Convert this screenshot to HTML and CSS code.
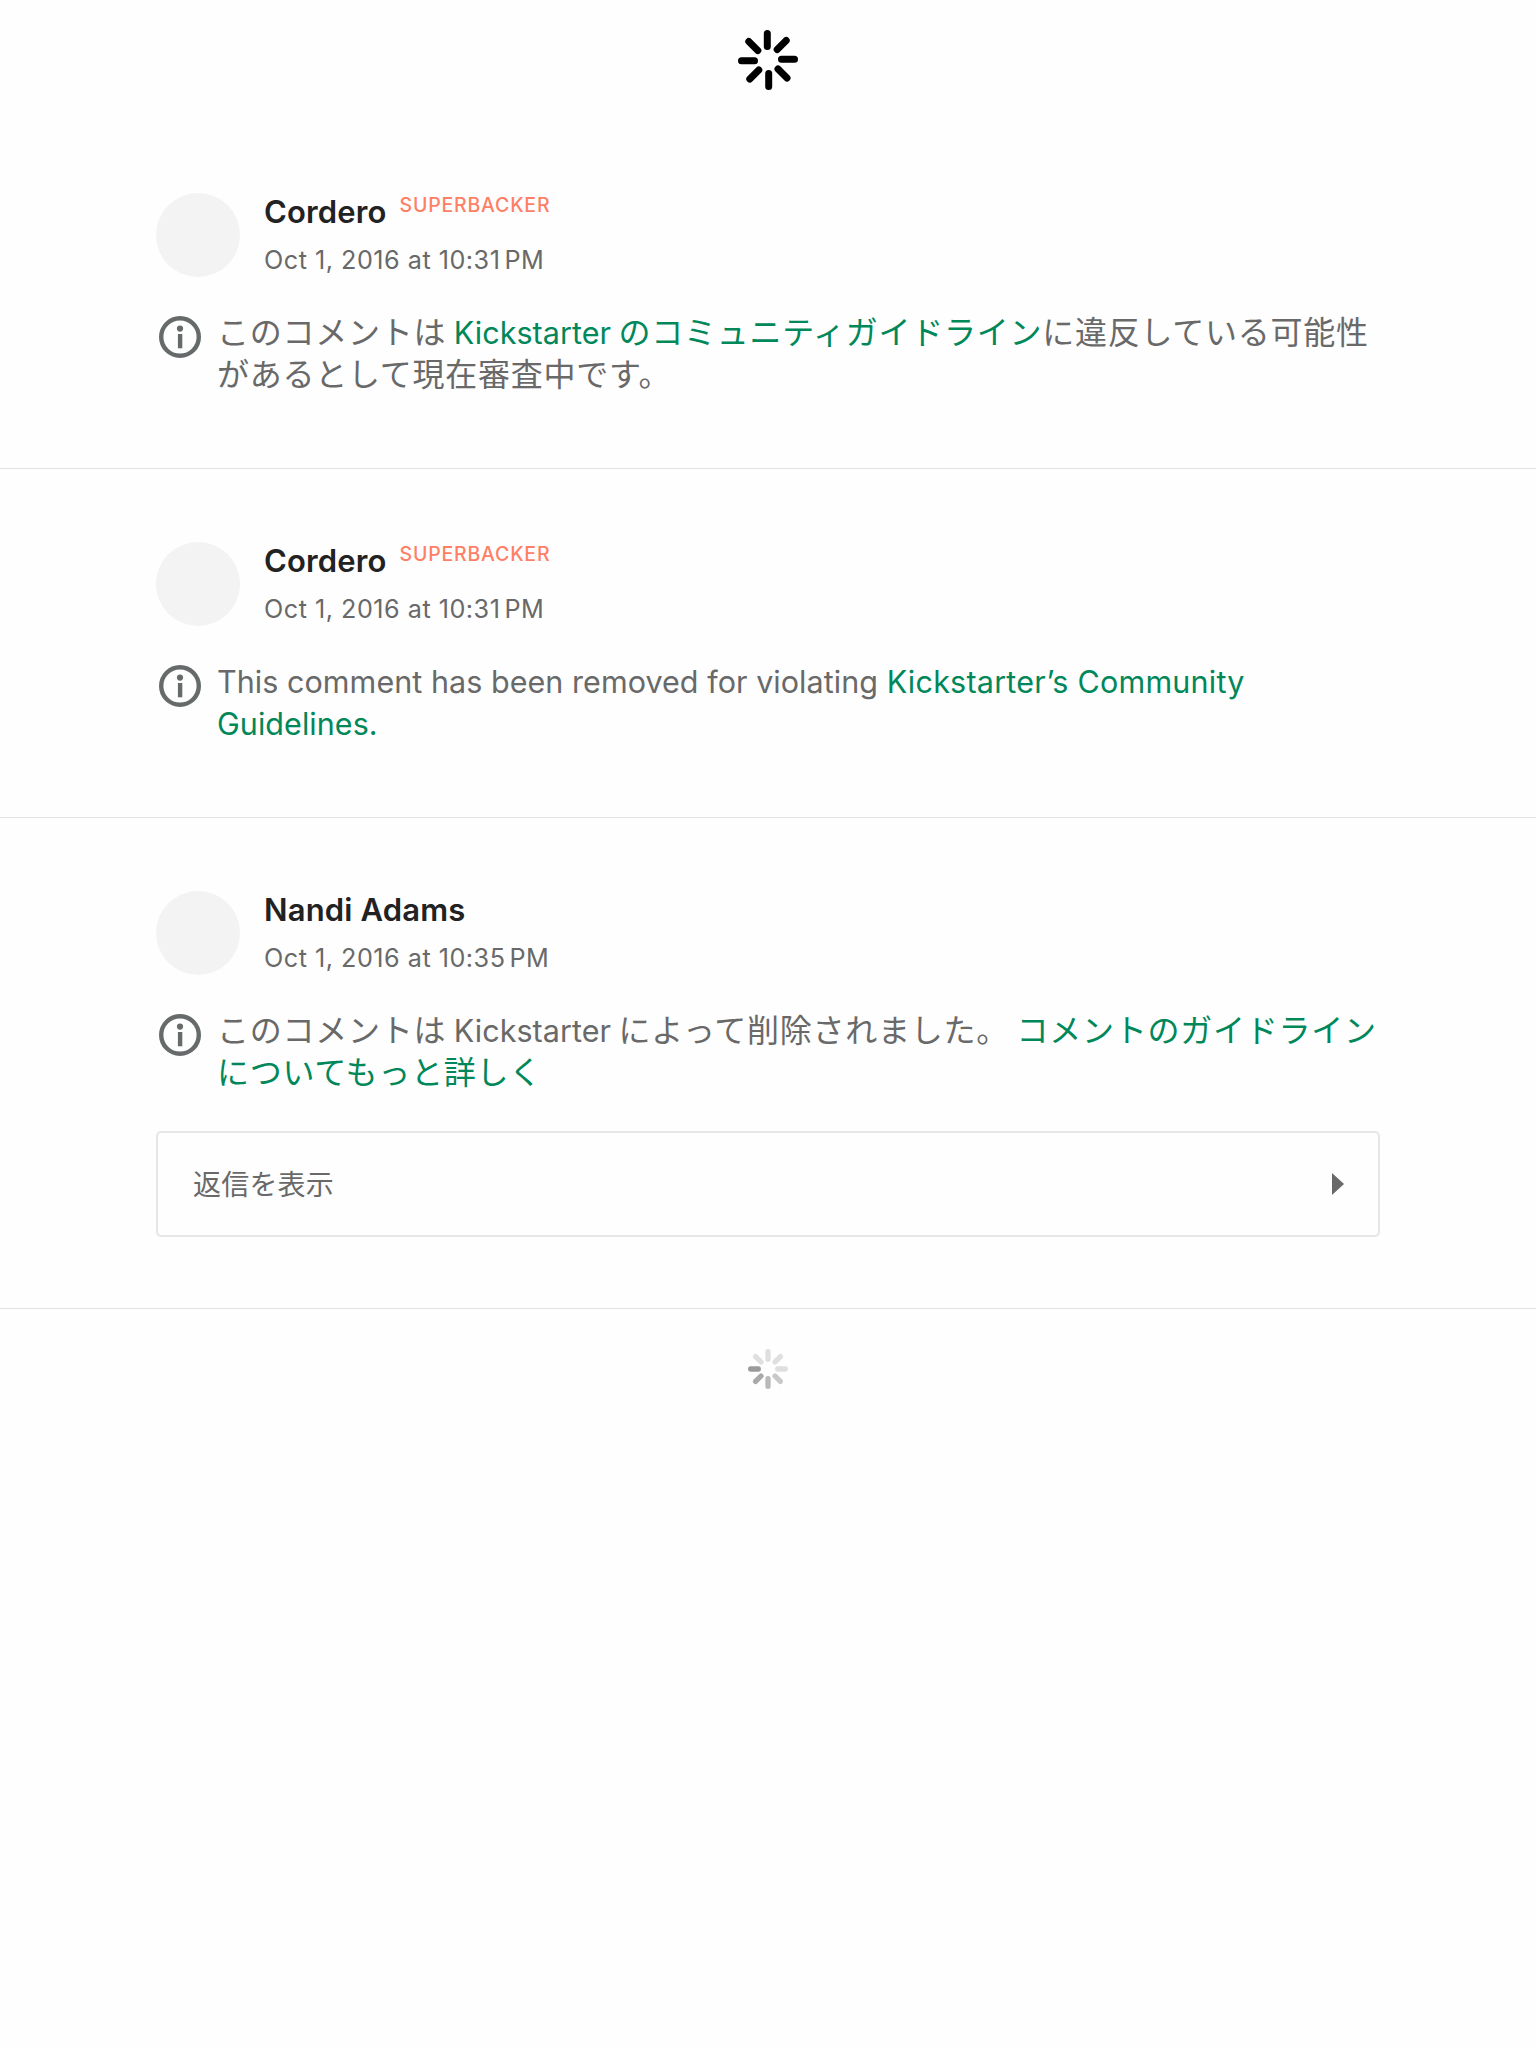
FILE: index.html
```html
<!DOCTYPE html>
<html lang="ja">
<head>
<meta charset="utf-8">
<title>Comments</title>
<link rel="stylesheet" href="styles.css">
</head>
<body>
<svg class="defs" width="0" height="0" aria-hidden="true">
  <symbol id="info" viewBox="-21 -21 42 42">
    <circle r="18.8" fill="none" stroke="currentColor" stroke-width="4.4"/>
    <circle cy="-8.4" r="3.1" fill="currentColor"/>
    <rect x="-2.1" y="-3" width="4.4" height="14.3" fill="currentColor"/>
  </symbol>
</svg>
<header class="refresh">
  <svg class="refresh-spinner" viewBox="-30 -30 60 60">
    <path d="M-.7-26.5V-13.5M.7 26.5V13.5M-26.5 .7H-13.5M26.5-.7H13.5M9.2-10.5L18.2-19.5M-10.2-9.5L-19.2-18.5M10 9L19 18M-9.2 10L-18.2 19"/>
  </svg>
</header>
<main>
  <article class="comment">
    <div class="author">
      <div class="avatar"></div>
      <div class="meta">
        <div class="name-row"><span class="name">Cordero</span><span class="badge">SUPERBACKER</span></div>
        <div class="date">Oct 1, 2016 at 10:31<span class="thin"></span>PM</div>
      </div>
    </div>
    <div class="notice">
      <svg class="info"><use href="#info"/></svg>
      <p class="text"><span class="line">このコメントは <a><span class="latin">Kickstarter</span> のコミュニティガイドライン</a>に違反している可能性</span><span class="line">があるとして現在審査中です。</span></p>
    </div>
  </article>
  <article class="comment">
    <div class="author">
      <div class="avatar"></div>
      <div class="meta">
        <div class="name-row"><span class="name">Cordero</span><span class="badge">SUPERBACKER</span></div>
        <div class="date">Oct 1, 2016 at 10:31<span class="thin"></span>PM</div>
      </div>
    </div>
    <div class="notice">
      <svg class="info"><use href="#info"/></svg>
      <p class="text english"><span class="line">This comment has been removed for violating <a class="wide">Kickstarter’s Community</a></span><span class="line"><a>Guidelines.</a></span></p>
    </div>
  </article>
  <article class="comment">
    <div class="author">
      <div class="avatar"></div>
      <div class="meta">
        <div class="name-row"><span class="name">Nandi Adams</span></div>
        <div class="date">Oct 1, 2016 at 10:35<span class="thin"></span>PM</div>
      </div>
    </div>
    <div class="notice">
      <svg class="info"><use href="#info"/></svg>
      <p class="text"><span class="line">このコメントは <span class="latin">Kickstarter</span> によって削除されました。 <a>コメントのガイドライン</a></span><span class="line"><a>についてもっと詳しく</a></span></p>
    </div>
    <div class="replies">
      <span class="replies-label">返信を表示</span>
      <svg class="arrow" viewBox="0 0 12 22"><path d="M0 0L12 11L0 22Z"/></svg>
    </div>
  </article>
</main>
<footer class="loading">
  <svg class="loading-spinner" viewBox="-20 -20 40 40">
    <path stroke="#dfdfdf" d="M0-17.3V-9.7M17.3 0H9.7M7-7L12.4-12.4M-7-7L-12.4-12.4"/>
    <path stroke="#c9c9ca" d="M7 7L12.4 12.4"/>
    <path stroke="#b9b9ba" d="M0 17.3V9.7"/>
    <path stroke="#a9a9aa" d="M-7 7L-12.4 12.4"/>
    <path stroke="#999a9b" d="M-17.3 0H-9.7"/>
  </svg>
</footer>
</body>
</html>
```
FILE: styles.css
```css
* {
  box-sizing: border-box;
}

body {
  margin: 0;
  min-height: 2048px;
  background: #fefefe;
  color: #696969;
  font-family: Inter, "Noto Sans CJK JP", sans-serif;
}

.defs {
  display: block;
}

.refresh {
  display: flex;
  justify-content: center;
  height: 120px;
  padding-top: 30px;
}

.refresh-spinner {
  width: 60px;
  height: 60px;
  fill: none;
  stroke: #000;
  stroke-width: 7;
  stroke-linecap: round;
}

.comment {
  padding: 73px 156px 71px;
  border-bottom: 1px solid #e3e3e3;
}

.author {
  display: flex;
  gap: 24px;
}

.avatar {
  width: 84px;
  height: 84px;
  border-radius: 50%;
  background: #f3f3f3;
}

.name-row {
  display: flex;
  gap: 13px;
  height: 38px;
}

.name {
  color: #222;
  font-size: 31px;
  font-weight: 600;
  line-height: 38px;
  letter-spacing: 0.15px;
}

.badge {
  color: #ff7f66;
  font-size: 19.5px;
  font-weight: 500;
  line-height: 25px;
  letter-spacing: 0.8px;
}

.date {
  margin-top: 13px;
  font-size: 25.2px;
  line-height: 32px;
  letter-spacing: 0.5px;
  white-space: nowrap;
}

.thin {
  display: inline-block;
  width: 4px;
}

.notice {
  display: flex;
  gap: 16px;
  margin-top: 36px;
  padding-left: 3px;
}

.info {
  flex: none;
  width: 42px;
  height: 42px;
  margin-top: 3px;
  color: #666a6a;
}

.text {
  margin: -1px 0 1px;
  font-size: 32px;
  letter-spacing: 0.75px;
  word-spacing: -2.3px;
}

.line {
  display: block;
  height: 42px;
  line-height: 42px;
  white-space: nowrap;
}

.english,
.latin {
  font-size: 30.5px;
  letter-spacing: 0.05px;
}

.english {
  word-spacing: 0;
}

.text a {
  color: #00875a;
}

.wide {
  letter-spacing: 0.23px;
}

.replies {
  display: flex;
  align-items: center;
  justify-content: space-between;
  height: 106px;
  margin-top: 36px;
  padding: 0 34px 0 35px;
  border: 2px solid #e6e6e6;
  border-radius: 5px;
}

.replies-label {
  padding-bottom: 2px;
  font-size: 28px;
  letter-spacing: 0.2px;
}

.arrow {
  width: 12px;
  height: 22px;
  fill: #696969;
}

.loading {
  display: flex;
  justify-content: center;
  padding-top: 40px;
}

.loading-spinner {
  width: 40px;
  height: 40px;
  fill: none;
  stroke-width: 5.3;
  stroke-linecap: round;
}
```
